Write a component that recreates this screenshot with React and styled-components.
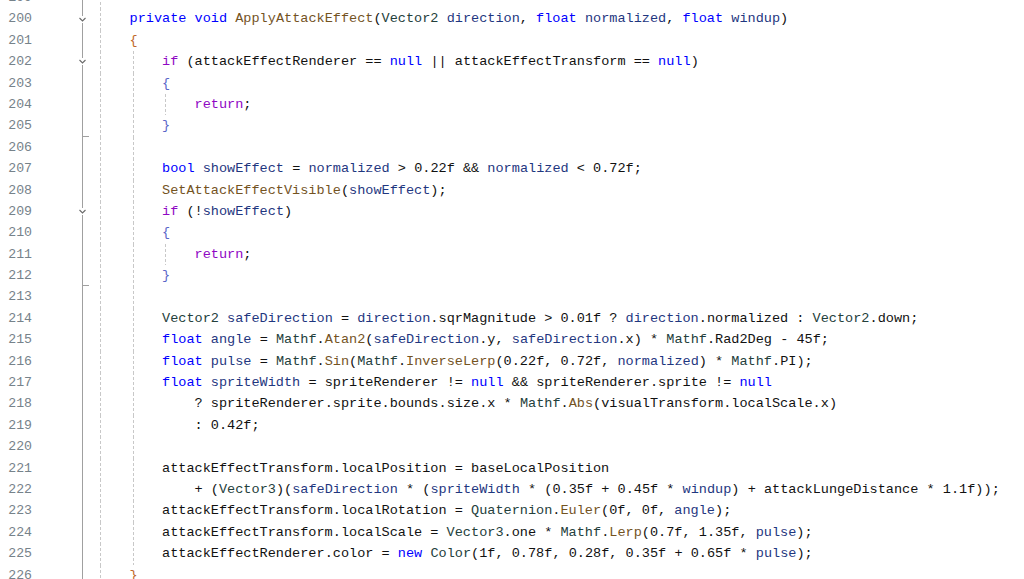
import React from "react";
import styled, { createGlobalStyle } from "styled-components";

const GlobalStyle = createGlobalStyle`
  html, body {
    margin: 0;
    padding: 0;
    background: #ffffff;
    overflow: hidden;
  }
  body {
    font-family: "Liberation Mono", "DejaVu Sans Mono", monospace;
  }
`;

const LINE_H = 21.4;

const COLORS = {
  kw: "#0000ff",
  ctl: "#8f08c4",
  method: "#74531f",
  type: "#24403c",
  local: "#1f377f",
  plain: "#111111",
  brace1: "#c0692a",
  brace2: "#5a66c8",
};

const KW = new Set(["private", "void", "float", "bool", "null", "new"]);
const CTL = new Set(["if", "return"]);
const TYPES = new Set(["Vector2", "Vector3", "Mathf", "Quaternion", "Color"]);
const LOCALS = new Set([
  "direction",
  "normalized",
  "windup",
  "showEffect",
  "safeDirection",
  "angle",
  "pulse",
  "spriteWidth",
]);

// line number, text, indent guides, fold marker
const LINES = [
  [199, "", 1],
  [200, "    private void ApplyAttackEffect(Vector2 direction, float normalized, float windup)", 1, "open"],
  [201, "    {", 1],
  [202, "        if (attackEffectRenderer == null || attackEffectTransform == null)", 2, "open"],
  [203, "        {", 2],
  [204, "            return;", 3],
  [205, "        }", 2, "end"],
  [206, "", 2],
  [207, "        bool showEffect = normalized > 0.22f && normalized < 0.72f;", 2],
  [208, "        SetAttackEffectVisible(showEffect);", 2],
  [209, "        if (!showEffect)", 2, "open"],
  [210, "        {", 2],
  [211, "            return;", 3],
  [212, "        }", 2, "end"],
  [213, "", 2],
  [214, "        Vector2 safeDirection = direction.sqrMagnitude > 0.01f ? direction.normalized : Vector2.down;", 2],
  [215, "        float angle = Mathf.Atan2(safeDirection.y, safeDirection.x) * Mathf.Rad2Deg - 45f;", 2],
  [216, "        float pulse = Mathf.Sin(Mathf.InverseLerp(0.22f, 0.72f, normalized) * Mathf.PI);", 2],
  [217, "        float spriteWidth = spriteRenderer != null && spriteRenderer.sprite != null", 2],
  [218, "            ? spriteRenderer.sprite.bounds.size.x * Mathf.Abs(visualTransform.localScale.x)", 2],
  [219, "            : 0.42f;", 2],
  [220, "", 2],
  [221, "        attackEffectTransform.localPosition = baseLocalPosition", 2],
  [222, "            + (Vector3)(safeDirection * (spriteWidth * (0.35f + 0.45f * windup) + attackLungeDistance * 1.1f));", 2],
  [223, "        attackEffectTransform.localRotation = Quaternion.Euler(0f, 0f, angle);", 2],
  [224, "        attackEffectTransform.localScale = Vector3.one * Mathf.Lerp(0.7f, 1.35f, pulse);", 2],
  [225, "        attackEffectRenderer.color = new Color(1f, 0.78f, 0.28f, 0.35f + 0.65f * pulse);", 2],
  [226, "    }", 1],
];

const tokenize = (text, depth) => {
  const parts = text.match(/\d+(?:\.\d+)?f?|[A-Za-z_]\w*|\s+|./g) || [];
  return parts.map((tok, i) => {
    let kind = "plain";
    const prev = parts[i - 1];
    const next = parts[i + 1];
    if (/^[A-Za-z_]/.test(tok)) {
      if (KW.has(tok)) kind = "kw";
      else if (CTL.has(tok)) kind = "ctl";
      else if (TYPES.has(tok)) kind = "type";
      else if (next === "(") kind = "method";
      else if (prev === ".") kind = "plain";
      else if (LOCALS.has(tok)) kind = "local";
    } else if (tok === "{" || tok === "}") {
      kind = depth <= 1 ? "brace1" : "brace2";
    }
    return { tok, kind };
  });
};

const Editor = styled.div`
  width: 1024px;
  height: 579px;
  overflow: hidden;
  background: #ffffff;
  display: flex;
  align-items: stretch;
`;

const Column = styled.div`
  display: flex;
  flex-direction: column;
  flex-shrink: 0;
  width: ${(p) => p.$w}px;
  & > * {
    flex-shrink: 0;
    height: ${LINE_H}px;
  }
  & > :first-child {
    margin-top: -13px;
  }
`;

const FoldColumn = styled(Column)`
  border-right: 1px solid #a0a0a0;
`;

const CodeColumn = styled(Column)`
  flex: 1;
  min-width: 0;
`;

const LineNo = styled.div`
  text-align: right;
  color: #76828a;
  font-size: 13.2px;
  line-height: ${LINE_H}px;
`;

const FoldCell = styled.div`
  display: flex;
  justify-content: flex-end;
  align-items: center;
`;

const TickCell = styled.div`
  display: flex;
  align-items: flex-end;
`;

const Chevron = styled.svg`
  margin-right: -5px;
  flex-shrink: 0;
  position: relative;
  z-index: 1;
  background: #ffffff;
  display: block;
`;

const EndTick = styled.span`
  display: block;
  width: 6px;
  height: 1px;
  background: #a0a0a0;
`;

const Code = styled.div`
  white-space: pre;
  font-size: 13.55px;
  line-height: ${LINE_H}px;
  color: ${COLORS.plain};
`;

const Guide = styled.span`
  display: inline-block;
  width: 4ch;
  height: ${LINE_H}px;
  vertical-align: top;
  background-image: linear-gradient(#c8c8c8 60%, transparent 60%);
  background-size: 1px 5px;
  background-repeat: repeat-y;
  background-position: 3px 0;
`;

const Tok = styled.span`
  color: ${(p) => COLORS[p.$kind]};
`;

const CodeLine = ({ text, guides }) => {
  const rest = text.slice(Math.min(guides * 4, text.match(/^ */)[0].length));
  return (
    <Code>
      {Array.from({ length: guides }).map((_, i) => (
        <Guide key={i} />
      ))}
      {tokenize(rest, guides).map((t, i) => (
        <Tok key={i} $kind={t.kind}>
          {t.tok}
        </Tok>
      ))}
    </Code>
  );
};

const ChevronIcon = () => (
  <Chevron width="9" height="7" viewBox="0 0 9 7">
    <polyline
      points="1.5,2 4.5,5 7.5,2"
      fill="none"
      stroke="#6a6a6a"
      strokeWidth="1.1"
    />
  </Chevron>
);

export default function App() {
  return (
    <>
      <GlobalStyle />
      <Editor>
        <Column $w={32}>
          {LINES.map(([no]) => (
            <LineNo key={no}>{no}</LineNo>
          ))}
        </Column>
        <FoldColumn $w={50}>
          {LINES.map(([no, , , fold]) => (
            <FoldCell key={no}>{fold === "open" && <ChevronIcon />}</FoldCell>
          ))}
        </FoldColumn>
        <Column $w={14}>
          {LINES.map(([no, , , fold]) => (
            <TickCell key={no}>{fold === "end" && <EndTick />}</TickCell>
          ))}
        </Column>
        <CodeColumn>
          {LINES.map(([no, text, guides]) => (
            <CodeLine key={no} text={text} guides={guides} />
          ))}
        </CodeColumn>
      </Editor>
    </>
  );
}
